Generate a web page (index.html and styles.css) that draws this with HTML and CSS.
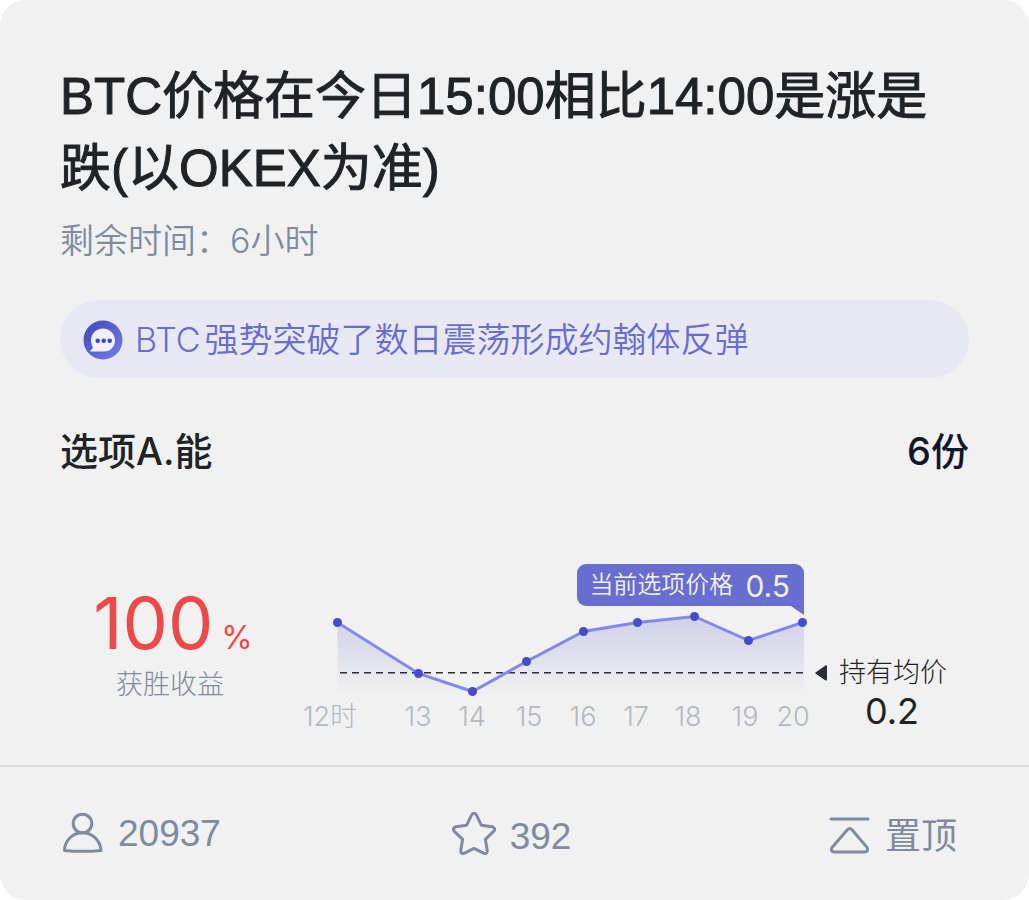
FILE: index.html
```html
<!DOCTYPE html>
<html lang="zh-CN">
<head>
<meta charset="utf-8">
<meta name="viewport" content="width=device-width, initial-scale=1">
<title>BTC价格竞猜</title>
<link rel="stylesheet" href="styles.css">
</head>
<body>
<main class="card">
  <header class="intro">
    <h1 class="title">BTC价格在今日15:00相比14:00是涨是跌(以OKEX为准)</h1>
    <p class="remaining">剩余时间：6小时</p>
  </header>

  <a class="notice" href="#news">
    <svg class="notice-icon" viewBox="0 0 40 40" aria-hidden="true">
      <defs>
        <linearGradient id="badge" x1="0" y1="0" x2="1" y2="1">
          <stop offset="0.2" stop-color="#4a51c8"/>
          <stop offset="0.85" stop-color="#6f76df"/>
        </linearGradient>
      </defs>
      <circle cx="20" cy="20" r="19.5" fill="url(#badge)"/>
      <path d="M20 8.500C26.800 8.500 32 13.700 32 20.300C32 27 27.500 31.500 21 31.500H8.200C7 31.500 7 30.800 7.800 30.200C9.300 29 10.200 28.200 9.800 27C8.700 25 8 22.700 8 20.300C8 13.700 13.200 8.500 20 8.500Z" fill="#f2f2f6"/>
      <g fill="#3d43dc"><circle cx="14.700" cy="20.700" r="2.300"/><circle cx="20.700" cy="20.700" r="2.300"/><circle cx="26.700" cy="20.700" r="2.300"/></g>
    </svg>
    <span><span class="ticker">BTC</span>强势突破了数日震荡形成约翰体反弹</span>
  </a>

  <section class="option">
    <h2 class="option-name">选项A.能</h2>
    <span class="option-count">6份</span>
  </section>

  <section class="stats">
    <div class="profit">
      <div class="profit-value">100<span class="profit-unit">%</span></div>
      <div class="profit-label">获胜收益</div>
    </div>

    <div class="chart">
      <svg class="chart-plot" viewBox="0 0 513 171" role="img" aria-label="选项价格走势">
        <defs>
          <linearGradient id="area" gradientUnits="userSpaceOnUse" x1="0" y1="52" x2="0" y2="131">
            <stop offset="0" stop-color="#686dd0" stop-opacity="0.25"/>
            <stop offset="0.45" stop-color="#686dd0" stop-opacity="0.14"/>
            <stop offset="1" stop-color="#686dd0" stop-opacity="0"/>
          </linearGradient>
        </defs>
        <path d="M37.500 58.500L118.500 109.500L172.500 127.500L226.500 97.500L283.500 67.500L337.500 58.500L394.500 52.500L448.500 76.500L502.500 58.500H504V131H37.500Z" fill="url(#area)"/>
        <path class="average-line" d="M40 108.700H504"/>
        <path class="price-line" d="M37.500 58.500L118.500 109.500L172.500 127.500L226.500 97.500L283.500 67.500L337.500 58.500L394.500 52.500L448.500 76.500L502.500 58.500"/>
        <g class="points">
          <circle cx="37.500" cy="58.500" r="4.500"/><circle cx="118.500" cy="109.500" r="4.500"/><circle cx="172.500" cy="127.500" r="4.500"/><circle cx="226.500" cy="97.500" r="4.500"/><circle cx="283.500" cy="67.500" r="4.500"/><circle cx="337.500" cy="58.500" r="4.500"/><circle cx="394.500" cy="52.500" r="4.500"/><circle cx="448.500" cy="76.500" r="4.500"/><circle cx="502.500" cy="58.500" r="4.500"/>
        </g>
        <g class="hours">
          <text x="30" y="162">12时</text><text x="118" y="162">13</text><text x="172" y="162">14</text><text x="229" y="162">15</text><text x="283" y="162">16</text><text x="336" y="162">17</text><text x="388" y="162">18</text><text x="445" y="162">19</text><text x="493" y="162">20</text>
        </g>
      </svg>
      <div class="tip">
        <span>当前选项价格</span><strong class="tip-value">0.5</strong>
        <svg class="tip-tail" viewBox="0 0 13 9" aria-hidden="true"><path d="M0 0H13V9Z"/></svg>
      </div>
    </div>

    <div class="average">
      <div class="average-label">
        <svg class="average-arrow" viewBox="0 0 12 16" aria-hidden="true"><path d="M0.800 7.200L10.500 0.400Q12 0 12 1.600V14.400Q12 16 10.500 15.400L0.800 8.800Q-0.200 8 0.800 7.200Z"/></svg>
        <span>持有均价</span>
      </div>
      <strong class="average-value">0.2</strong>
    </div>
  </section>

  <footer class="actions">
    <button class="action" type="button" aria-label="参与人数 20937">
      <svg class="action-icon" viewBox="0 0 44 44" aria-hidden="true"><circle cx="22.500" cy="11.500" r="9.300"/><path d="M4.500 38.500C4.800 28 13 20.800 22.500 20.800S40.200 28 41 38.500Q22.500 40.200 4.500 38.500Z"/></svg>
      <span>20937</span>
    </button>
    <button class="action action-star" type="button" aria-label="收藏 392">
      <svg class="action-icon" viewBox="0 0 44 44" aria-hidden="true"><path d="M19.500 3.200Q22 -0.600 24.500 3.200L29.300 13.200L40.200 14.700Q44.200 16 41.600 19.400L33.400 27.300L35.200 38.200Q35.400 42.700 31.400 41.200L22 36.400L12.600 41.200Q8.600 42.700 8.800 38.200L10.600 27.300L2.400 19.400Q-0.200 16 3.800 14.700L14.700 13.200Z"/></svg>
      <span>392</span>
    </button>
    <button class="action action-pin" type="button">
      <svg class="action-icon" viewBox="0 0 44 44" aria-hidden="true"><path d="M4 7H41"/><path d="M20.600 17.500Q22.700 15.300 24.800 17.500L40 35.400Q42 39.500 37.800 40H7Q3 39.500 5 35.400Z"/></svg>
      <span>置顶</span>
    </button>
  </footer>
</main>
</body>
</html>
```
FILE: styles.css
```css
* {
  box-sizing: border-box;
}

body {
  margin: 0;
  background: #fff;
  color: #1f2326;
  font-family: Inter, "Noto Sans CJK SC", sans-serif;
}

.card {
  display: flex;
  flex-direction: column;
  min-height: 100vh;
  padding-top: 61px;
  border-radius: 26px;
  background: #f1f1f1;
}

.intro {
  padding: 0 60px;
}

.title {
  margin: 0;
  font-family: "Liberation Sans", "Noto Sans CJK SC", sans-serif;
  font-size: 51px;
  font-weight: 400;
  line-height: 72px;
  -webkit-text-stroke: 1px #1f2326;
}

.remaining {
  margin: 12px 0 0;
  color: #808b9f;
  font-size: 34px;
  font-weight: 350;
  line-height: 48px;
}

.notice {
  display: flex;
  align-items: center;
  gap: 12px;
  min-height: 78px;
  margin: 35px 60px 0;
  padding: 2px 23px 0;
  border-radius: 39px;
  background: #e8e8f3;
  color: #686dd0;
  font-size: 34px;
  font-weight: 350;
  line-height: 48px;
  text-decoration: none;
}

.notice-icon {
  flex: none;
  width: 40px;
  height: 40px;
}

.ticker {
  margin-right: 4px;
}

.option {
  display: flex;
  justify-content: space-between;
  align-items: center;
  margin-top: 49px;
  padding: 0 60px;
  font-size: 38px;
  font-weight: 500;
  line-height: 48px;
}

.option-name {
  margin: 0;
  font-size: inherit;
  font-weight: inherit;
}

.option-count {
  color: #11162a;
}

.stats {
  display: grid;
  grid-template-columns: 240px 1fr 134px;
  align-items: end;
  margin-top: 89px;
  padding: 0 82px 30px 60px;
}

.profit {
  justify-self: start;
  width: 226px;
  padding-bottom: 31px;
  text-align: center;
}

.profit-value {
  color: #ee4848;
  font-size: 72px;
  font-weight: 400;
  line-height: 56px;
}

.profit-unit {
  margin-left: 8px;
  font-size: 32px;
}

.profit-label {
  padding-right: 6px;
  color: #808b9f;
  font-size: 27px;
  font-weight: 300;
  line-height: 38px;
}

.chart {
  position: relative;
}

.chart-plot {
  display: block;
  width: 100%;
}

.average-line {
  stroke: #2c2e35;
  stroke-width: 1.6;
  stroke-dasharray: 7 5;
}

.price-line {
  fill: none;
  stroke: #8189f0;
  stroke-width: 3;
}

.points {
  fill: #454bc9;
}

.hours {
  fill: #b3b8c2;
  font-size: 27px;
  font-weight: 300;
  text-anchor: middle;
}

.tip {
  position: absolute;
  top: 0;
  right: 9px;
  display: flex;
  align-items: center;
  gap: 12px;
  height: 42px;
  padding: 0 14px 0 12px;
  border-radius: 9px 9px 0 9px;
  background: #686dd0;
  color: #f1f1f1;
  font-size: 24px;
  font-weight: 350;
  line-height: 40px;
  white-space: nowrap;
}

.tip-value {
  padding-top: 2px;
  font-size: 30px;
  font-weight: 400;
}

.tip-tail {
  position: absolute;
  top: 100%;
  right: 0;
  width: 13px;
  height: 9px;
  fill: #686dd0;
}

.average {
  display: grid;
  justify-items: end;
  padding-bottom: 6px;
}

.average-label {
  display: flex;
  align-items: center;
  gap: 12px;
  font-size: 27px;
  font-weight: 300;
  line-height: 40px;
  white-space: nowrap;
}

.average-arrow {
  width: 12px;
  height: 16px;
  fill: #2c2e35;
}

.average-value {
  margin-right: 28px;
  font-size: 36px;
  font-weight: 400;
  line-height: 36px;
}

.actions {
  display: grid;
  flex: 1;
  grid-template-columns: 1fr auto 1fr;
  align-items: center;
  min-height: 135px;
  padding: 0 60px;
  border-top: 2px solid #dcdddf;
}

.action {
  display: flex;
  align-items: center;
  gap: 14px;
  padding: 0;
  border: 0;
  background: none;
  color: #808b9f;
  font-family: "Liberation Sans", "Noto Sans CJK SC", sans-serif;
  font-size: 37px;
  line-height: 48px;
  cursor: pointer;
}

.action-star {
  padding-right: 6px;
}

.action-star span,
.action-pin span {
  padding-top: 6px;
}

.action-pin {
  justify-self: end;
  padding-right: 12px;
  font-size: 36px;
}

.action-icon {
  width: 44px;
  height: 44px;
  fill: none;
  stroke: #808b9f;
  stroke-width: 3;
  stroke-linecap: round;
  stroke-linejoin: round;
}
```
